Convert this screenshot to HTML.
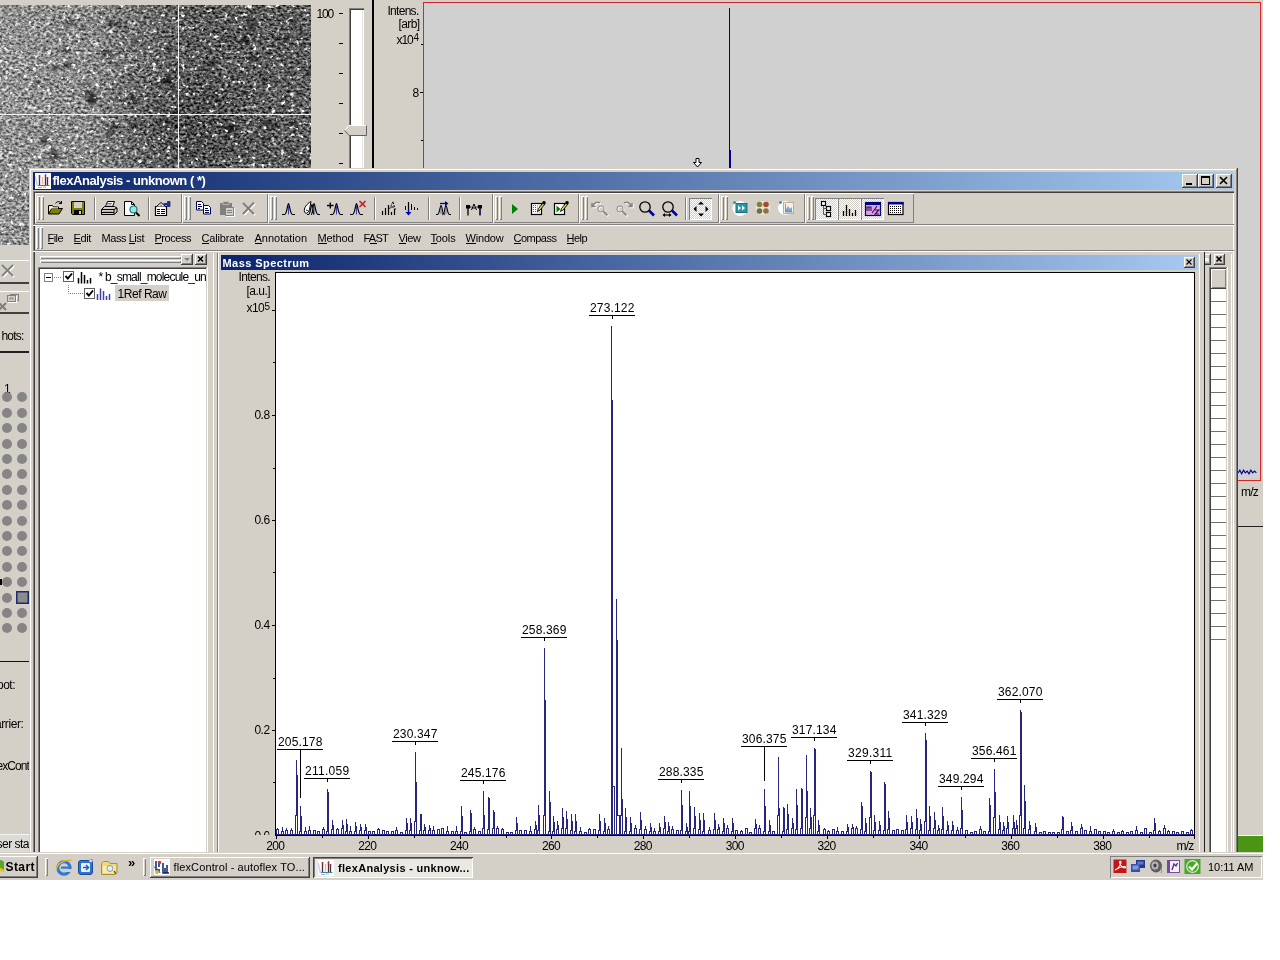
<!DOCTYPE html><html><head><meta charset="utf-8"><title>flexAnalysis - unknown</title><style>
html,body{margin:0;padding:0;background:#fff;}
body{width:1280px;height:960px;position:relative;overflow:hidden;font-family:"Liberation Sans",sans-serif;font-size:11px;color:#000;}
.a{position:absolute;}
#desk{left:0;top:0;width:1263px;height:880px;background:#d4d0c8;overflow:hidden;will-change:transform;}
.t{position:absolute;white-space:nowrap;line-height:13px;font-size:11px;}
.c{position:absolute;white-space:nowrap;line-height:14px;font-size:12px;letter-spacing:0.33px;}
.raised{box-shadow:inset -1px -1px 0 #404040,inset 1px 1px 0 #d4d0c8,inset -2px -2px 0 #808080,inset 2px 2px 0 #fff;background:#d4d0c8;}
.sunken{box-shadow:inset -1px -1px 0 #fff,inset 1px 1px 0 #808080,inset -2px -2px 0 #d4d0c8,inset 2px 2px 0 #404040;}
.btn{box-shadow:inset -1px -1px 0 #404040,inset 1px 1px 0 #fff,inset -2px -2px 0 #808080;background:#d4d0c8;}
.u{text-decoration:underline;}
</style></head><body>
<div id="desk" class="a">
<svg class="a" style="left:0;top:5px" width="311" height="240" viewBox="0 0 311 240">
<defs>
<filter id="nz" x="0" y="0" width="100%" height="100%" color-interpolation-filters="sRGB">
<feTurbulence type="fractalNoise" baseFrequency="0.32 0.42" numOctaves="2" seed="7" result="n"/>
<feColorMatrix in="n" type="matrix" values="1 0 0 0 0  1 0 0 0 0  1 0 0 0 0  0 0 0 0 1" result="g"/>
<feComposite in="SourceGraphic" in2="g" operator="arithmetic" k1="0" k2="1" k3="1.1" k4="-0.55" result="b1"/>
<feTurbulence type="fractalNoise" baseFrequency="0.21 0.24" numOctaves="2" seed="21" result="n2"/>
<feColorMatrix in="n2" type="matrix" values="0 0 0 0 1  0 0 0 0 1  0 0 0 0 1  0 6 0 0 -3.75" result="spk"/>
<feTurbulence type="fractalNoise" baseFrequency="0.05 0.07" numOctaves="2" seed="5" result="n3"/>
<feColorMatrix in="n3" type="matrix" values="0 0 0 0 0  0 0 0 0 0  0 0 0 0 0  0 0 3 0 -1.95" result="dk"/>
<feMerge><feMergeNode in="b1"/><feMergeNode in="dk"/><feMergeNode in="spk"/></feMerge>
</filter>
<linearGradient id="mg" x1="0" x2="1" y1="0" y2="0">
<stop offset="0" stop-color="#909090"/><stop offset="0.3" stop-color="#868686"/><stop offset="0.5" stop-color="#686868"/><stop offset="0.62" stop-color="#585858"/><stop offset="1" stop-color="#5a5a5a"/>
</linearGradient>
<radialGradient id="rg" cx="0.56" cy="0.5" r="0.3"><stop offset="0" stop-color="#000" stop-opacity=".22"/><stop offset="1" stop-color="#000" stop-opacity="0"/></radialGradient>
</defs>
<g filter="url(#nz)"><rect width="311" height="240" fill="url(#mg)"/><rect width="311" height="240" fill="url(#rg)"/></g>
<rect x="0" y="109" width="311" height="1" fill="#f4f4f4"/>
<rect x="178" y="0" width="1" height="165" fill="#f4f4f4"/>
</svg>
<div class="t" style="left:316.50px;top:7px;font-size:12px;line-height:15px;letter-spacing:-1.174px;color:#000;">100</div>
<div class="a" style="left:339px;top:13px;width:4px;height:1px;background:#000;"></div>
<div class="a" style="left:339px;top:43px;width:4px;height:1px;background:#000;"></div>
<div class="a" style="left:339px;top:73px;width:4px;height:1px;background:#000;"></div>
<div class="a" style="left:339px;top:103px;width:4px;height:1px;background:#000;"></div>
<div class="a" style="left:339px;top:133px;width:4px;height:1px;background:#000;"></div>
<div class="a" style="left:339px;top:163px;width:4px;height:1px;background:#000;"></div>
<div class="a" style="left:349px;top:8px;width:15px;height:165px;background:#fff;box-shadow:inset 1px 1px 0 #808080,inset 2px 2px 0 #404040,inset -1px 0 0 #fff,inset -2px 0 0 #e8e6e0;"></div>
<svg class="a" style="left:344px;top:125px" width="24" height="11" viewBox="0 0 24 11"><path d="M0.5 5.5 L5 0.5 H22.5 V10.5 H5 Z" fill="#d4d0c8"/><path d="M0.5 5.5 L5 0.5 H22.5" fill="none" stroke="#fff"/><path d="M22.5 0.5 V10.5 H5 L0.5 5.5" fill="none" stroke="#606060"/></svg>
<div class="a" style="left:372px;top:0px;width:1.6px;height:170px;background:#000;"></div>
<div class="t" style="left:387.50px;top:4px;font-size:12px;line-height:15px;letter-spacing:-0.718px;color:#000;">Intens.</div>
<div class="t" style="left:398.50px;top:17px;font-size:12px;line-height:15px;letter-spacing:-0.602px;color:#000;">[arb]</div>
<div class="t" style="left:396.50px;top:33px;font-size:12px;line-height:15px;letter-spacing:-1.116px;color:#000;">x10</div>
<div class="t" style="left:413.50px;top:31px;font-size:10px;line-height:13px;letter-spacing:-0.062px;color:#000;">4</div>
<div class="t" style="left:412.50px;top:86px;font-size:12px;line-height:15px;letter-spacing:-0.674px;color:#000;">8</div>
<div class="a" style="left:421px;top:44px;width:2px;height:1px;background:#000;"></div>
<div class="a" style="left:420px;top:92px;width:3px;height:1px;background:#000;"></div>
<div class="a" style="left:421px;top:140px;width:2px;height:1px;background:#000;"></div>
<div class="a" style="left:423px;top:2px;width:838px;height:479px;background:#d0d0d0;box-shadow:inset 0 0 0 1px #d42626;"></div>
<div class="a" style="left:729px;top:8px;width:1px;height:162px;background:#00008b;"></div>
<div class="a" style="left:729px;top:150px;width:2px;height:20px;background:#00008b;"></div>
<svg class="a" style="left:693px;top:158px" width="9" height="10" viewBox="0 0 9 10"><path d="M3 0.5h3v4h2.5L4.5 9 .5 4.5H3z" fill="#fff" stroke="#000" stroke-width="1"/></svg>
<svg class="a" style="left:1238px;top:467px" width="22" height="10" viewBox="0 0 24 10"><path d="M0 6 l2 -3 l2 4 l2 -4 l2 3 l2 -2 l2 3 l2 -4 l2 3 l2 -2 l2 2" fill="none" stroke="#00008b" stroke-width="1.2"/></svg>
<div class="t" style="left:1241.00px;top:485px;font-size:12px;line-height:15px;letter-spacing:-0.777px;color:#000;">m/z</div>
<div class="a" style="left:1238px;top:526px;width:26px;height:1.3px;background:#202020;"></div>
<div class="a" style="left:1238px;top:835px;width:26px;height:1px;background:#fff;"></div>
<div class="a" style="left:1238px;top:836px;width:26px;height:16px;background:#4a9614;"></div>
<div class="a" style="left:0px;top:260px;width:29px;height:1px;background:#fff;"></div>
<div class="a" style="left:0px;top:282px;width:29px;height:1.5px;background:#404040;"></div>
<svg class="a" style="left:0;top:263px" width="16" height="16" viewBox="0 0 16 16"><path d="M3 3L14 14M14 3L3 14" stroke="#fff" stroke-width="2"/><path d="M2 2L13 13M13 2L2 13" stroke="#808080" stroke-width="1.800"/></svg>
<div class="a" style="left:0px;top:291px;width:29px;height:1px;background:#fff;"></div>
<div class="a" style="left:0px;top:312px;width:29px;height:1.5px;background:#404040;"></div>
<svg class="a" style="left:0;top:293px" width="20" height="19" viewBox="0 0 20 19"><rect x="10.500" y="1.500" width="8" height="6" fill="#d4d0c8" stroke="#808080"/><rect x="8.500" y="3.500" width="8" height="6" fill="#d4d0c8" stroke="#fff"/><rect x="7.500" y="2.500" width="8" height="6" fill="#d4d0c8" stroke="#808080"/><path d="M10 7v-2h3v2" stroke="#808080" fill="none"/><path d="M-1 10L6 17M6 10L-1 17" stroke="#808080" stroke-width="2"/></svg>
<div class="t" style="left:1.50px;top:329px;font-size:12px;line-height:15px;letter-spacing:-0.803px;color:#000;">hots:</div>
<div class="a" style="left:0px;top:351px;width:29px;height:1.5px;background:#202020;"></div>
<div class="t" style="left:4.00px;top:382px;font-size:12px;line-height:15px;letter-spacing:-3.174px;color:#000;">1</div>
<div class="a" style="left:2.2px;top:392.3px;width:10px;height:10px;border-radius:50%;background:#858585;"></div>
<div class="a" style="left:17.3px;top:392.3px;width:10px;height:10px;border-radius:50%;background:#858585;"></div>
<div class="a" style="left:2.2px;top:407.7px;width:10px;height:10px;border-radius:50%;background:#858585;"></div>
<div class="a" style="left:17.3px;top:407.7px;width:10px;height:10px;border-radius:50%;background:#858585;"></div>
<div class="a" style="left:2.2px;top:423.1px;width:10px;height:10px;border-radius:50%;background:#858585;"></div>
<div class="a" style="left:17.3px;top:423.1px;width:10px;height:10px;border-radius:50%;background:#858585;"></div>
<div class="a" style="left:2.2px;top:438.5px;width:10px;height:10px;border-radius:50%;background:#858585;"></div>
<div class="a" style="left:17.3px;top:438.5px;width:10px;height:10px;border-radius:50%;background:#858585;"></div>
<div class="a" style="left:2.2px;top:453.9px;width:10px;height:10px;border-radius:50%;background:#858585;"></div>
<div class="a" style="left:17.3px;top:453.9px;width:10px;height:10px;border-radius:50%;background:#858585;"></div>
<div class="a" style="left:2.2px;top:469.3px;width:10px;height:10px;border-radius:50%;background:#858585;"></div>
<div class="a" style="left:17.3px;top:469.3px;width:10px;height:10px;border-radius:50%;background:#858585;"></div>
<div class="a" style="left:2.2px;top:484.7px;width:10px;height:10px;border-radius:50%;background:#858585;"></div>
<div class="a" style="left:17.3px;top:484.7px;width:10px;height:10px;border-radius:50%;background:#858585;"></div>
<div class="a" style="left:2.2px;top:500.1px;width:10px;height:10px;border-radius:50%;background:#858585;"></div>
<div class="a" style="left:17.3px;top:500.1px;width:10px;height:10px;border-radius:50%;background:#858585;"></div>
<div class="a" style="left:2.2px;top:515.5px;width:10px;height:10px;border-radius:50%;background:#858585;"></div>
<div class="a" style="left:17.3px;top:515.5px;width:10px;height:10px;border-radius:50%;background:#858585;"></div>
<div class="a" style="left:2.2px;top:530.9px;width:10px;height:10px;border-radius:50%;background:#858585;"></div>
<div class="a" style="left:17.3px;top:530.9px;width:10px;height:10px;border-radius:50%;background:#858585;"></div>
<div class="a" style="left:2.2px;top:546.3px;width:10px;height:10px;border-radius:50%;background:#858585;"></div>
<div class="a" style="left:17.3px;top:546.3px;width:10px;height:10px;border-radius:50%;background:#858585;"></div>
<div class="a" style="left:2.2px;top:561.7px;width:10px;height:10px;border-radius:50%;background:#858585;"></div>
<div class="a" style="left:17.3px;top:561.7px;width:10px;height:10px;border-radius:50%;background:#858585;"></div>
<div class="a" style="left:2.2px;top:577.1px;width:10px;height:10px;border-radius:50%;background:#858585;"></div>
<div class="a" style="left:17.3px;top:577.1px;width:10px;height:10px;border-radius:50%;background:#858585;"></div>
<div class="a" style="left:2.2px;top:592.5px;width:10px;height:10px;border-radius:50%;background:#858585;"></div>
<div class="a" style="left:16px;top:591px;width:13px;height:13px;background:#8c8c8c;box-shadow:inset 0 0 0 1.500px #1c2c6c;"></div>
<div class="a" style="left:2.2px;top:607.9px;width:10px;height:10px;border-radius:50%;background:#858585;"></div>
<div class="a" style="left:17.3px;top:607.9px;width:10px;height:10px;border-radius:50%;background:#858585;"></div>
<div class="a" style="left:2.2px;top:623.3px;width:10px;height:10px;border-radius:50%;background:#858585;"></div>
<div class="a" style="left:17.3px;top:623.3px;width:10px;height:10px;border-radius:50%;background:#858585;"></div>
<div class="a" style="left:0px;top:579px;width:2px;height:6px;background:#000;"></div>
<div class="a" style="left:0px;top:661px;width:29px;height:1.2px;background:#101010;"></div>
<div class="a" style="left:0;top:660px;width:29px;height:200px;overflow:hidden">
<div class="t" style="left:-3.00px;top:18px;font-size:12px;line-height:15px;letter-spacing:-0.504px;color:#000;">oot:</div>
<div class="t" style="left:-5.00px;top:57px;font-size:12px;line-height:15px;letter-spacing:-0.405px;color:#000;">arrier:</div>
<div class="t" style="left:-3.50px;top:99px;font-size:12px;line-height:15px;letter-spacing:-0.920px;color:#000;">exCont</div>
<div class="a" style="left:0px;top:174px;width:29px;height:20px;background:#dddbd5;box-shadow:inset 0 1px 0 #f4f3f0;"></div>
<div class="t" style="left:-3.50px;top:177px;font-size:12px;line-height:15px;letter-spacing:-0.502px;color:#000;">ser sta</div>
</div>
<div class="a raised" style="left:29px;top:168px;width:1209px;height:690px;background:#d4d0c8;"></div>
<div class="a" style="left:33px;top:172px;width:1201px;height:18px;background:linear-gradient(90deg,#0a246a,#a6caf0);"></div>
<svg class="a" style="left:35px;top:173px" width="16" height="16" viewBox="0 0 16 16"><rect width="16" height="16" fill="#fdfdff"/><path d="M4.500 2v10M10.500 1.500v10.500M12.500 4v8" stroke="#4a2a3a" stroke-width="1.300"/><path d="M4.500 2v3M10.500 1.500v3M12.500 4v2" stroke="#a03030" stroke-width="1.300"/><path d="M7.500 4v7.500" stroke="#f4b0a0" stroke-width="1.400"/><path d="M2 12.500h12.500" stroke="#3c8c84"/><path d="M3 14.500h4M8 14h3" stroke="#9cb0e8"/><path d="M0 3l2.500 10" stroke="#c8d0f0" stroke-width="1.500"/></svg>
<div class="t" style="left:52.50px;top:173px;font-size:13px;line-height:16px;letter-spacing:-0.460px;color:#fff;font-weight:bold;">flexAnalysis - unknown ( *)</div>
<div class="a btn" style="left:1182px;top:174px;width:16px;height:14px;background:#d4d0c8;"></div>
<svg class="a" style="left:1182px;top:174px" width="16" height="14" viewBox="0 0 16 14"><rect x="4" y="9" width="6" height="2" fill="#000"/></svg>
<div class="a btn" style="left:1198px;top:174px;width:16px;height:14px;background:#d4d0c8;"></div>
<svg class="a" style="left:1198px;top:174px" width="16" height="14" viewBox="0 0 16 14"><rect x="3.5" y="2.5" width="8" height="8" fill="none" stroke="#000"/><rect x="3" y="2" width="9" height="2" fill="#000"/></svg>
<div class="a btn" style="left:1216px;top:174px;width:16px;height:14px;background:#d4d0c8;"></div>
<svg class="a" style="left:1216px;top:174px" width="16" height="14" viewBox="0 0 16 14"><path d="M4 3l7 7M11 3l-7 7" stroke="#000" stroke-width="1.7"/></svg>
<div class="a" style="left:33px;top:191px;width:1201px;height:670px;background:#d4d0c8;box-shadow:inset 1px 1px 0 #808080,inset 2px 2px 0 #404040,inset -1px -1px 0 #fff;"></div>
<div class="a" style="left:35px;top:193px;width:147px;height:30px;background:#d4d0c8;box-shadow:inset 1px 1px 0 #fff,inset -1px -1px 0 #808080;"></div>
<div class="a" style="left:37px;top:196px;width:3px;height:24px;background:#d4d0c8;box-shadow:inset 1px 1px 0 #fff,inset -1px -1px 0 #808080;"></div>
<div class="a" style="left:41px;top:196px;width:3px;height:24px;background:#d4d0c8;box-shadow:inset 1px 1px 0 #fff,inset -1px -1px 0 #808080;"></div>
<div class="a" style="left:182px;top:193px;width:86px;height:30px;background:#d4d0c8;box-shadow:inset 1px 1px 0 #fff,inset -1px -1px 0 #808080;"></div>
<div class="a" style="left:184px;top:196px;width:3px;height:24px;background:#d4d0c8;box-shadow:inset 1px 1px 0 #fff,inset -1px -1px 0 #808080;"></div>
<div class="a" style="left:188px;top:196px;width:3px;height:24px;background:#d4d0c8;box-shadow:inset 1px 1px 0 #fff,inset -1px -1px 0 #808080;"></div>
<div class="a" style="left:268px;top:193px;width:225px;height:30px;background:#d4d0c8;box-shadow:inset 1px 1px 0 #fff,inset -1px -1px 0 #808080;"></div>
<div class="a" style="left:270px;top:196px;width:3px;height:24px;background:#d4d0c8;box-shadow:inset 1px 1px 0 #fff,inset -1px -1px 0 #808080;"></div>
<div class="a" style="left:274px;top:196px;width:3px;height:24px;background:#d4d0c8;box-shadow:inset 1px 1px 0 #fff,inset -1px -1px 0 #808080;"></div>
<div class="a" style="left:493px;top:193px;width:86px;height:30px;background:#d4d0c8;box-shadow:inset 1px 1px 0 #fff,inset -1px -1px 0 #808080;"></div>
<div class="a" style="left:495px;top:196px;width:3px;height:24px;background:#d4d0c8;box-shadow:inset 1px 1px 0 #fff,inset -1px -1px 0 #808080;"></div>
<div class="a" style="left:499px;top:196px;width:3px;height:24px;background:#d4d0c8;box-shadow:inset 1px 1px 0 #fff,inset -1px -1px 0 #808080;"></div>
<div class="a" style="left:579px;top:193px;width:140px;height:30px;background:#d4d0c8;box-shadow:inset 1px 1px 0 #fff,inset -1px -1px 0 #808080;"></div>
<div class="a" style="left:581px;top:196px;width:3px;height:24px;background:#d4d0c8;box-shadow:inset 1px 1px 0 #fff,inset -1px -1px 0 #808080;"></div>
<div class="a" style="left:585px;top:196px;width:3px;height:24px;background:#d4d0c8;box-shadow:inset 1px 1px 0 #fff,inset -1px -1px 0 #808080;"></div>
<div class="a" style="left:719px;top:193px;width:86px;height:30px;background:#d4d0c8;box-shadow:inset 1px 1px 0 #fff,inset -1px -1px 0 #808080;"></div>
<div class="a" style="left:721px;top:196px;width:3px;height:24px;background:#d4d0c8;box-shadow:inset 1px 1px 0 #fff,inset -1px -1px 0 #808080;"></div>
<div class="a" style="left:725px;top:196px;width:3px;height:24px;background:#d4d0c8;box-shadow:inset 1px 1px 0 #fff,inset -1px -1px 0 #808080;"></div>
<div class="a" style="left:805px;top:193px;width:109px;height:30px;background:#d4d0c8;box-shadow:inset 1px 1px 0 #fff,inset -1px -1px 0 #808080;"></div>
<div class="a" style="left:807px;top:196px;width:3px;height:24px;background:#d4d0c8;box-shadow:inset 1px 1px 0 #fff,inset -1px -1px 0 #808080;"></div>
<div class="a" style="left:811px;top:196px;width:3px;height:24px;background:#d4d0c8;box-shadow:inset 1px 1px 0 #fff,inset -1px -1px 0 #808080;"></div>
<div class="a" style="left:94px;top:197px;width:1px;height:23px;background:#808080;"></div>
<div class="a" style="left:95px;top:197px;width:1px;height:23px;background:#fff;"></div>
<div class="a" style="left:148px;top:197px;width:1px;height:23px;background:#808080;"></div>
<div class="a" style="left:149px;top:197px;width:1px;height:23px;background:#fff;"></div>
<div class="a" style="left:374px;top:197px;width:1px;height:23px;background:#808080;"></div>
<div class="a" style="left:375px;top:197px;width:1px;height:23px;background:#fff;"></div>
<div class="a" style="left:428px;top:197px;width:1px;height:23px;background:#808080;"></div>
<div class="a" style="left:429px;top:197px;width:1px;height:23px;background:#fff;"></div>
<div class="a" style="left:459px;top:197px;width:1px;height:23px;background:#808080;"></div>
<div class="a" style="left:460px;top:197px;width:1px;height:23px;background:#fff;"></div>
<div class="a" style="left:685px;top:197px;width:1px;height:23px;background:#808080;"></div>
<div class="a" style="left:686px;top:197px;width:1px;height:23px;background:#fff;"></div>
<div class="a" style="left:689px;top:198px;width:23px;height:22px;background:#ebe9e4;box-shadow:inset 1px 1px 0 #808080,inset -1px -1px 0 #fff;background-image:repeating-conic-gradient(#fff 0 25%,#d4d0c8 0 50%);background-size:2px 2px;"></div>
<div class="a" style="left:815px;top:198px;width:23px;height:22px;background:#ebe9e4;box-shadow:inset 1px 1px 0 #808080,inset -1px -1px 0 #fff;background-image:repeating-conic-gradient(#fff 0 25%,#d4d0c8 0 50%);background-size:2px 2px;"></div>
<div class="a" style="left:838px;top:198px;width:23px;height:22px;background:#ebe9e4;box-shadow:inset 1px 1px 0 #808080,inset -1px -1px 0 #fff;background-image:repeating-conic-gradient(#fff 0 25%,#d4d0c8 0 50%);background-size:2px 2px;"></div>
<div class="a" style="left:861px;top:198px;width:23px;height:22px;background:#ebe9e4;box-shadow:inset 1px 1px 0 #808080,inset -1px -1px 0 #fff;background-image:repeating-conic-gradient(#fff 0 25%,#d4d0c8 0 50%);background-size:2px 2px;"></div>
<svg class="a" style="left:0;top:0" width="1264" height="880" viewBox="0 0 1264 880"><g transform="translate(47 200)"><path d="M1.500 5.500h4l1 1.500h5v2" fill="#ffff9c" stroke="#000"/><path d="M1.500 5.500v8.500" stroke="#000"/><path d="M1.500 14l3-5.500h11l-3.500 5.500z" fill="#808000" stroke="#000"/><path d="M2.500 7v4.500l1.500-3h7v-1h-5.500l-1-1.500z" fill="#ffff9c"/><path d="M8.500 3.500c1.500-2.500 4.500-2.500 6 0M14.500 1v2.500h-2.500" stroke="#000" fill="none"/></g><g transform="translate(71 201)"><path d="M0.500 0.500h13v13h-12l-1-1z" fill="#808000" stroke="#000"/><rect x="3" y="1" width="8" height="6" fill="#d4d0c8"/><rect x="3" y="9" width="8" height="4.500" fill="#000"/><rect x="8" y="10" width="2" height="3" fill="#d4d0c8"/></g><g transform="translate(101 201)"><path d="M4.500 5.500l2-5h7l-2 5" fill="#fff" stroke="#000"/><path d="M0.500 8.500l3-3h10l2.500 1.500v4l-3 2.500h-12.500z" fill="#d4d0c8" stroke="#000"/><path d="M0.500 8.500h12.500l3-1.500M13 8.500v5" stroke="#000" fill="none"/><path d="M2 10.500h9" stroke="#c0c000"/><path d="M0.500 11.500h12.500" stroke="#000"/><path d="M6 2.500h5M5.500 4h5" stroke="#808080"/></g><g transform="translate(124 201)"><path d="M0.500 0.500h7l3 3v11h-10z" fill="#fff" stroke="#000"/><path d="M7.500 0.500v3h3" stroke="#000" fill="none"/><circle cx="9.500" cy="8.500" r="3.500" fill="#a8e0e0" stroke="#008080" stroke-width="1.200"/><path d="M12 11.500l3.500 3.500" stroke="#000" stroke-width="2"/></g><g transform="translate(155 201)"><path d="M0.500 5.500h11v9h-11z" fill="#fff" stroke="#000" stroke-width="1.200"/><path d="M2 8.500h3M6 8.500h4M2 10.500h3M6 10.500h4M2 12.500h3M6 12.500h4" stroke="#000"/><path d="M1.500 5.500l4.500-4 4.500 4" fill="#fff" stroke="#000"/><path d="M4 4.500l2 -2 2 2M5 5l1-1 1 1" stroke="#808080" stroke-width=".8" fill="none"/><path d="M8.500 2.500h4v-2h2.500v5h-2.500v-1.500h-3" fill="#2030a0" stroke="#101870" stroke-width=".7"/></g><g transform="translate(196 201)"><path d="M0.500 0.500h5l2 2v6.500h-7z" fill="#fff" stroke="#000050"/><path d="M2 3.500h3M2 5.500h4M2 7.500h2" stroke="#000050"/><path d="M7.500 4.500h5l2 2v6.500h-7z" fill="#fff" stroke="#000050"/><path d="M9 7.500h3M9 9.500h4M9 11.500h4" stroke="#000050"/></g><g transform="translate(219 201)"><path d="M1 2h12v12h-12z" fill="#808080"/><path d="M4 0.500h6v3h-6z" fill="#808080" stroke="#d4d0c8" stroke-width=".6"/><path d="M6.500 6.500h8v8h-8z" fill="#d4d0c8" stroke="#808080"/><path d="M8 9.500h5M8 11.500h5" stroke="#808080"/><path d="M7 15.500h8.500v-8.500" stroke="#fff" fill="none"/></g><g transform="translate(242 202)"><path d="M2 2l11 11M13 1.500l-11 11.500" stroke="#fff" stroke-width="2" fill="none"/><path d="M1 1l11 11M12 0.500l-11 11.500" stroke="#808080" stroke-width="2" fill="none"/></g><g transform="translate(282 203)"><path d="M0 11.500h2.500c2.500 0 3-11 4-11s1.500 11 4 11h2.500" stroke="#000" fill="none" stroke-width="1.200"/><path d="M6.500 2v9.500" stroke="#3030a0" stroke-width=".9"/></g><g transform="translate(304 203)"><path d="M3 11.500h1.500c2 0 2.500-10 3.500-10s1 10 2 10M7 11.500c2 0 2-11 3-11s1.500 11 4 11h2" stroke="#000" fill="none" stroke-width="1.200"/><path d="M0.500 9c-1-4 2-8 6.500-10.500l-1.500 8c-1 3-3.500 5-5 2.500z" fill="#fff" stroke="#000" stroke-width="1"/><path d="M2 7l2.500 1" stroke="#000" stroke-width=".8"/><path d="M10 2v9.500" stroke="#3030a0" stroke-width=".9"/></g><g transform="translate(330 203)"><path d="M-3 2.500h6.500M0.300 -0.500v6" stroke="#000" fill="none" stroke-width="1.400"/><path d="M0 11.500h2.500c2.500 0 3-11 4-11s1.500 11 4 11h2.500" stroke="#000" fill="none" stroke-width="1.200"/><path d="M6.500 2v9.500" stroke="#3030a0" stroke-width=".9"/></g><g transform="translate(350 203)"><path d="M0 11.500h2.500c2.500 0 3-11 4-11s1.500 11 4 11h2.500" stroke="#000" fill="none" stroke-width="1.200"/><path d="M6.500 2v9.500" stroke="#3030a0" stroke-width=".9"/><path d="M9.500 -2l6 6M15.500 -2l-6 6" stroke="#c82020" stroke-width="1.700" fill="none"/></g><g transform="translate(382 201)"><path d="M0.500 14v-4M3.500 14v-7M6.500 14v-10M9.500 14v-3M12.500 14v-6" stroke="#000" stroke-width="1.200"/><path d="M7.500 8l3.500-7.500 2.500 9" stroke="#000" fill="none" stroke-width=".9" stroke-dasharray="2 1"/><path d="M9 6h3" stroke="#000"/></g><g transform="translate(405 202)"><path d="M3.500 0v9" stroke="#000" stroke-width="1.200"/><path d="M0.500 4v4M6.500 2v6" stroke="#000"/><path d="M9.500 5v3M12.500 6v2" stroke="#000"/><path d="M3.500 8v4" stroke="#0000c0" stroke-width="1.400"/><path d="M0.500 10h6l-3 3.500z" fill="#0000c0"/></g><g transform="translate(436 201)"><path d="M0 13.500h1.500c2 0 2.500-9 3.500-9s1.500 8 2.500 8 1.500-8 2.500-8 1.500 9 3.500 9h1.500" stroke="#000" fill="none" stroke-width="1.100"/><path d="M5 6v7M10 6v7" stroke="#4040a0" stroke-width=".7"/><path d="M4 2.500h7" stroke="#0000a0" stroke-width="1.300"/><path d="M9 0l3.500 2.500-3.500 2.500z" fill="#0000a0"/><path d="M6 12l3 2M9 12l-3 2" stroke="#000" stroke-width=".7"/></g><g transform="translate(466 204)"><path d="M2 2.500v9M14 2.500v9" stroke="#000" stroke-width="1.300"/><rect x="0" y="1" width="4" height="3.500" fill="#000"/><rect x="12" y="1" width="4" height="3.500" fill="#000"/><path d="M4 3h1.500M10.500 3h1.500" stroke="#000"/><path d="M5.500 6l2.500-6 2.500 6M6.500 4h3" stroke="#000" fill="none" stroke-width="1"/><path d="M14 5v6" stroke="#0000a0" stroke-width=".8"/></g><g transform="translate(512 204)"><path d="M0 0l6 5-6 5z" fill="#008000"/></g><g transform="translate(531 201)"><rect x="0.500" y="2.500" width="10" height="11" fill="#fff" stroke="#000" stroke-width="1.200"/><path d="M2.500 4v8M4.500 4v8" stroke="#606060" stroke-dasharray="1 1"/><path d="M6 5h3M6 7h2M6 9h2M6 11h3" stroke="#8080c0" stroke-dasharray="1 1"/><path d="M6.500 10.500l1-3 5-6 1.500 1.500-5 6z" fill="#e8e060" stroke="#000" stroke-width=".9"/><circle cx="13" cy="1.800" r="1.800" fill="#000"/></g><g transform="translate(554 201)"><rect x="0.500" y="2.500" width="10" height="11" fill="#fff" stroke="#000" stroke-width="1.200"/><path d="M2.500 4.500l4 3.500-4 3.500z" fill="#008000"/><path d="M6.500 10.500l1-3 5-6 1.500 1.500-5 6z" fill="#e8e060" stroke="#000" stroke-width=".9"/><circle cx="13" cy="1.800" r="1.800" fill="#000"/></g><g transform="translate(592 201)"><g transform="translate(1 1)"><g transform="translate(5 4) scale(.72)"><circle cx="5.500" cy="5.500" r="4.300" fill="none" stroke="#fff" stroke-width="1.200"/><path d="M9 9l5.500 5.500" stroke="#fff" stroke-width="2.4"/></g><path d="M1 5c1-3 4-5 7-3M0 2v3.500h3.500" stroke="#fff" stroke-width="1.500" fill="none"/></g><g transform="translate(5 4) scale(.72)"><circle cx="5.500" cy="5.500" r="4.300" fill="none" stroke="#808080" stroke-width="1.200"/><path d="M9 9l5.500 5.500" stroke="#808080" stroke-width="2.4"/></g><path d="M1 5c1-3 4-5 7-3M0 2v3.500h3.500" stroke="#808080" stroke-width="1.500" fill="none"/></g><g transform="translate(616 201)"><g transform="translate(1 1)"><g transform="translate(0 4) scale(.72)"><circle cx="5.500" cy="5.500" r="4.300" fill="none" stroke="#fff" stroke-width="1.200"/><path d="M9 9l5.500 5.500" stroke="#fff" stroke-width="2.4"/></g><path d="M8 2c3-2 6 0 7 3M16 2v3.500h-3.500" stroke="#fff" stroke-width="1.500" fill="none"/></g><g transform="translate(0 4) scale(.72)"><circle cx="5.500" cy="5.500" r="4.300" fill="none" stroke="#808080" stroke-width="1.200"/><path d="M9 9l5.500 5.500" stroke="#808080" stroke-width="2.4"/></g><path d="M8 2c3-2 6 0 7 3M16 2v3.500h-3.500" stroke="#808080" stroke-width="1.500" fill="none"/></g><g transform="translate(639 201)"><circle cx="6" cy="6" r="5.200" fill="none" stroke="#000" stroke-width="1.300"/><path d="M10 9.500l5 5" stroke="#0000a0" stroke-width="2.600"/></g><g transform="translate(662 201)"><circle cx="6" cy="6" r="5.200" fill="none" stroke="#000" stroke-width="1.300"/><path d="M10 9.500l5 5" stroke="#0000a0" stroke-width="2.600"/><path d="M1.500 14h7" stroke="#000" stroke-width="1.200"/><path d="M0.500 14l2.500-2v4zM9.500 14l-2.500-2v4z" fill="#000"/></g><g transform="translate(693 201)"><path d="M8 0.500l3 3h-6zM8 15.500l3-3h-6zM0.500 8l3-3v6zM15.500 8l-3-3v6z" fill="#000"/></g><g transform="translate(732 200)"><circle cx="8" cy="8.500" r="7.500" fill="#fff"/><rect x="4" y="3.500" width="11" height="9" fill="#2898a8" stroke="#187080"/><path d="M6 5.500l3 2.500-3 2.500zM10 5.500l3 2.500-3 2.500z" fill="#fff"/><circle cx="2.500" cy="2.500" r="1.300" fill="#2080a0"/></g><g transform="translate(756 201)"><ellipse cx="7" cy="7" rx="7.500" ry="7" fill="#e8e4dc"/><circle cx="3.500" cy="3.500" r="2.800" fill="#808040"/><circle cx="10" cy="3.500" r="2.800" fill="#a05030"/><circle cx="3.500" cy="10" r="2.800" fill="#707038"/><circle cx="10" cy="10" r="2.800" fill="#907040"/></g><g transform="translate(778 200)"><circle cx="7" cy="8" r="7" fill="#fff"/><rect x="5.500" y="2.500" width="10" height="11" fill="#f4f0e8" stroke="#c0b090"/><path d="M7 11l3-5 2 3 2-2v5h-7z" fill="#80a0c8"/><path d="M7.500 4v8h7" stroke="#6080a0" fill="none" stroke-width=".8"/><circle cx="2.500" cy="2.500" r="1.300" fill="#2080a0"/></g><g transform="translate(818 201)"><rect x="3.500" y="0.500" width="4" height="4" fill="#fff" stroke="#000" stroke-width="1.200"/><rect x="8.500" y="5.500" width="4" height="4" fill="#fff" stroke="#000" stroke-width="1.200"/><rect x="8.500" y="11.500" width="4" height="4" fill="#fff" stroke="#000" stroke-width="1.200"/><path d="M5.500 5v8.500h3M5.500 7.500h3" stroke="#606060" fill="none"/></g><g transform="translate(843 202)"><path d="M0.500 14v-5M3.500 14v-11M6.500 14v-7M9.500 14v-3M12.500 14v-6" stroke="#000" stroke-width="1.300"/></g><g transform="translate(865 201)"><rect x="0.500" y="1.500" width="15" height="13" fill="#d8a8e0" stroke="#000080" stroke-width="1.200"/><rect x="0" y="1" width="16" height="3" fill="#000080"/><path d="M2 10v-4h2v4M4 6h2v4M7 12l5-7M10 9h4l-4 4h4" stroke="#400060" fill="none" stroke-width="1.100"/></g><g transform="translate(888 202)"><rect x="0.500" y="0.500" width="14.500" height="12" fill="#fff" stroke="#000" stroke-width="1.200"/><rect x="0" y="0" width="15.500" height="2.500" fill="#000080"/><path d="M2 4.500h12M2 6.500h12M2 8.500h12M2 10.500h12" stroke="#000" stroke-dasharray="1 1"/></g></svg>
<div class="a" style="left:33px;top:224px;width:1201px;height:1px;background:#808080;"></div>
<div class="a" style="left:33px;top:225px;width:1201px;height:1px;background:#fff;"></div>
<div class="a" style="left:36px;top:227px;width:3px;height:22px;background:#d4d0c8;box-shadow:inset 1px 1px 0 #fff,inset -1px -1px 0 #808080;"></div>
<div class="a" style="left:40px;top:227px;width:3px;height:22px;background:#d4d0c8;box-shadow:inset 1px 1px 0 #fff,inset -1px -1px 0 #808080;"></div>
<div class="a" style="left:47.5px;top:243px;width:6.7px;height:1px;background:#000"></div>
<div class="t" style="left:47.50px;top:231px;font-size:11px;line-height:14px;letter-spacing:-0.556px;color:#000;">File</div>
<div class="a" style="left:73.5px;top:243px;width:7.3px;height:1px;background:#000"></div>
<div class="t" style="left:73.50px;top:231px;font-size:11px;line-height:14px;letter-spacing:-0.364px;color:#000;">Edit</div>
<div class="a" style="left:128.6px;top:243px;width:6.1px;height:1px;background:#000"></div>
<div class="t" style="left:101.50px;top:231px;font-size:11px;line-height:14px;letter-spacing:-0.439px;color:#000;">Mass List</div>
<div class="a" style="left:154.5px;top:243px;width:7.3px;height:1px;background:#000"></div>
<div class="t" style="left:154.50px;top:231px;font-size:11px;line-height:14px;letter-spacing:-0.462px;color:#000;">Process</div>
<div class="a" style="left:201.5px;top:243px;width:7.9px;height:1px;background:#000"></div>
<div class="t" style="left:201.50px;top:231px;font-size:11px;line-height:14px;letter-spacing:-0.169px;color:#000;">Calibrate</div>
<div class="a" style="left:254.5px;top:243px;width:7.3px;height:1px;background:#000"></div>
<div class="t" style="left:254.50px;top:231px;font-size:11px;line-height:14px;letter-spacing:-0.010px;color:#000;">Annotation</div>
<div class="a" style="left:317.5px;top:243px;width:9.2px;height:1px;background:#000"></div>
<div class="t" style="left:317.50px;top:231px;font-size:11px;line-height:14px;letter-spacing:-0.115px;color:#000;">Method</div>
<div class="a" style="left:369.5px;top:243px;width:7.3px;height:1px;background:#000"></div>
<div class="t" style="left:363.50px;top:231px;font-size:11px;line-height:14px;letter-spacing:-0.752px;color:#000;">FAST</div>
<div class="a" style="left:398.5px;top:243px;width:7.3px;height:1px;background:#000"></div>
<div class="t" style="left:398.50px;top:231px;font-size:11px;line-height:14px;letter-spacing:-0.411px;color:#000;">View</div>
<div class="a" style="left:430.5px;top:243px;width:6.7px;height:1px;background:#000"></div>
<div class="t" style="left:430.50px;top:231px;font-size:11px;line-height:14px;letter-spacing:-0.136px;color:#000;">Tools</div>
<div class="a" style="left:465.5px;top:243px;width:10.4px;height:1px;background:#000"></div>
<div class="t" style="left:465.50px;top:231px;font-size:11px;line-height:14px;letter-spacing:-0.187px;color:#000;">Window</div>
<div class="a" style="left:513.5px;top:243px;width:7.9px;height:1px;background:#000"></div>
<div class="t" style="left:513.50px;top:231px;font-size:11px;line-height:14px;letter-spacing:-0.494px;color:#000;">Compass</div>
<div class="a" style="left:566.5px;top:243px;width:7.9px;height:1px;background:#000"></div>
<div class="t" style="left:566.50px;top:231px;font-size:11px;line-height:14px;letter-spacing:-0.531px;color:#000;">Help</div>
<div class="a" style="left:33px;top:250px;width:1201px;height:1px;background:#808080;"></div>
<div class="a" style="left:33px;top:251px;width:1201px;height:1px;background:#fff;"></div>
<div class="a" style="left:40px;top:256px;width:141px;height:3px;background:#d4d0c8;box-shadow:inset 1px 1px 0 #fff,inset -1px -1px 0 #808080;"></div>
<div class="a" style="left:40px;top:260px;width:141px;height:3px;background:#d4d0c8;box-shadow:inset 1px 1px 0 #fff,inset -1px -1px 0 #808080;"></div>
<div class="a btn" style="left:181px;top:254px;width:12px;height:11px;background:#d4d0c8;"></div>
<svg class="a" style="left:181px;top:254px" width="12" height="11" viewBox="0 0 12 11"><path d="M3 4h6l-3 3z" fill="#808080"/><path d="M4 5h6l-3 3z" fill="#fff" opacity=".0"/></svg>
<div class="a btn" style="left:195px;top:254px;width:12px;height:11px;background:#d4d0c8;"></div>
<svg class="a" style="left:195px;top:254px" width="12" height="11" viewBox="0 0 12 11"><path d="M3 2.5l5 5M8 2.5l-5 5" stroke="#000" stroke-width="1.5"/></svg>
<div class="a sunken" style="left:38px;top:267px;width:170px;height:590px;background:#fff;"></div>
<svg class="a" style="left:40px;top:269px" width="166" height="34" viewBox="0 0 166 34">
<rect x="4.500" y="4.500" width="8" height="8" fill="#fff" stroke="#808080"/><path d="M6 8.500h5" stroke="#000"/>
<path d="M14 8.500h7 M28.500 16v8.500h15" stroke="#808080" stroke-dasharray="1 1" fill="none"/>
<rect x="23.500" y="2.500" width="10" height="10" fill="#fff" stroke="#606060"/>
<path d="M25.500 7l2.300 2.500L32 4.500" stroke="#000" stroke-width="1.900" fill="none"/>
<path d="M38.500 14.500V9 M41.500 14.500V3 M44.500 14.500V6 M47.500 14.500V11 M50.500 14.500V9" stroke="#000" stroke-width="1.500"/>
<rect x="44.500" y="19.500" width="10" height="10" fill="#fff" stroke="#606060"/>
<path d="M46.500 24l2.300 2.500L53 21.500" stroke="#000" stroke-width="1.900" fill="none"/>
<path d="M57.500 31V25 M60.500 31V19.500 M63.500 31V22 M66.500 31V27 M69.500 31V25" stroke="#3a449c" stroke-width="1.500"/>
</svg>
<div class="a" style="left:40px;top:269px;width:166px;height:40px;overflow:hidden">
<div class="t" style="left:58.50px;top:1px;font-size:12px;line-height:15px;letter-spacing:-0.789px;color:#000;">* b_small_molecule_un</div>
</div>
<div class="a" style="left:115px;top:285px;width:54px;height:16px;background:#d4d0c8;"></div>
<div class="t" style="left:117.50px;top:287px;font-size:12px;line-height:15px;letter-spacing:-0.461px;color:#000;">1Ref Raw</div>
<div class="a" style="left:213px;top:253px;width:1px;height:601px;background:#fff;"></div>
<div class="a" style="left:217px;top:253px;width:1px;height:601px;background:#808080;"></div>
<div class="a" style="left:218px;top:253px;width:1px;height:601px;background:#fff;"></div>
<div class="a" style="left:221px;top:255px;width:977px;height:15px;background:linear-gradient(90deg,#0a246a,#a6caf0);"></div>
<div class="t" style="left:222.50px;top:256px;font-size:11px;line-height:14px;letter-spacing:0.438px;color:#fff;font-weight:bold;">Mass Spectrum</div>
<div class="a btn" style="left:1184px;top:257px;width:11px;height:11px;background:#d4d0c8;"></div>
<svg class="a" style="left:1184px;top:257px" width="11" height="11" viewBox="0 0 11 11"><path d="M2.500 2.500l5 5M7.500 2.500l-5 5" stroke="#000" stroke-width="1.100"/></svg>
<div class="t" style="left:238.50px;top:270px;font-size:12px;line-height:15px;letter-spacing:-0.646px;color:#000;">Intens.</div>
<div class="t" style="left:246.50px;top:284px;font-size:12px;line-height:15px;letter-spacing:-0.531px;color:#000;">[a.u.]</div>
<div class="t" style="left:246.50px;top:301px;font-size:12px;line-height:15px;letter-spacing:-0.616px;color:#000;">x10</div>
<div class="t" style="left:264.50px;top:300px;font-size:10px;line-height:13px;letter-spacing:0.438px;color:#000;">5</div>
<div class="t" style="left:254.50px;top:408px;font-size:12px;line-height:15px;letter-spacing:-0.561px;color:#000;">0.8</div>
<div class="t" style="left:254.50px;top:513px;font-size:12px;line-height:15px;letter-spacing:-0.561px;color:#000;">0.6</div>
<div class="t" style="left:254.50px;top:618px;font-size:12px;line-height:15px;letter-spacing:-0.561px;color:#000;">0.4</div>
<div class="t" style="left:254.50px;top:723px;font-size:12px;line-height:15px;letter-spacing:-0.561px;color:#000;">0.2</div>
<div class="t" style="left:254.50px;top:829px;font-size:12px;line-height:15px;letter-spacing:-0.561px;color:#000;clip-path:inset(0 0 9px 0);">0.0</div>
<svg class="a" style="left:0;top:0" width="1264" height="880" viewBox="0 0 1264 880" shape-rendering="crispEdges">
<rect x="275.5" y="272.5" width="919" height="563" fill="#fff" stroke="#000"/>
<path d="M272 310.5h3M273 362.5h2M272 415.5h3M273 468.5h2M272 520.5h3M273 572.5h2M272 625.5h3M273 678.5h2M272 730.5h3M273 782.5h2M276.5 836v3M322.5 836v2M368.5 836v3M414.5 836v2M460.5 836v3M506.5 836v2M551.5 836v3M597.5 836v2M643.5 836v3M689.5 836v2M735.5 836v3M781.5 836v2M827.5 836v3M873.5 836v2M919.5 836v3M965.5 836v2M1011.5 836v3M1057.5 836v2M1103.5 836v3M1149.5 836v2M1194.5 836v3" stroke="#000" fill="none"/>
<path d="M276 834.5H1194" stroke="#26267e" fill="none"/>
<path d="M276.5 835V829.5H278.5V835M277.5 829V828M281.5 835V831.5H283.5V835M282.5 831V827M285.5 835V830.5H287.5V835M286.5 830V828M290.5 835V830.5H292.5V835M291.5 830V828M295.5 835V815.5H297.5V835M296.5 815V760M297.5 815V775M299.5 835V831.5H301.5V835M300.5 831V806M301.5 831V816M304.5 835V831.5H306.5V835M305.5 831V827M308.5 835V830.5H310.5V835M309.5 830V826M313.5 835V830.5H315.5V835M314.5 830V830M317.5 835V831.5H319.5V835M318.5 831V831M322.5 835V829.5H324.5V835M323.5 829V827M326.5 835V831.5H328.5V835M327.5 831V789M328.5 831V792M331.5 835V829.5H333.5V835M332.5 829V820M333.5 829V825M336.5 835V829.5H338.5V835M337.5 829V828M341.5 835V828.5H343.5V835M342.5 828V820M343.5 828V825M345.5 835V831.5H347.5V835M346.5 831V819M347.5 831V824M349.5 835V831.5H351.5V835M350.5 831V826M354.5 835V831.5H356.5V835M355.5 831V822M356.5 831V826M359.5 835V830.5H361.5V835M360.5 830V824M361.5 830V827M364.5 835V830.5H366.5V835M365.5 830V824M366.5 830V827M368.5 835V831.5H370.5V835M369.5 831V831M372.5 835V831.5H374.5V835M373.5 831V831M377.5 835V829.5H379.5V835M378.5 829V828M382.5 835V830.5H384.5V835M383.5 830V830M386.5 835V831.5H388.5V835M387.5 831V831M391.5 835V831.5H393.5V835M392.5 831V831M395.5 835V830.5H397.5V835M396.5 830V827M400.5 835V832.5H402.5V835M401.5 832V832M405.5 835V830.5H407.5V835M406.5 830V818M407.5 830V823M409.5 835V830.5H411.5V835M410.5 830V818M411.5 830V823M414.5 835V821.5H416.5V835M415.5 821V752M416.5 821V782M419.5 835V830.5H421.5V835M420.5 830V814M421.5 830V814M423.5 835V830.5H425.5V835M424.5 830V824M425.5 830V827M428.5 835V830.5H430.5V835M429.5 830V825M430.5 830V828M432.5 835V830.5H434.5V835M433.5 830V826M437.5 835V829.5H439.5V835M438.5 829V829M441.5 835V828.5H443.5V835M442.5 828V828M446.5 835V831.5H448.5V835M447.5 831V826M451.5 835V831.5H453.5V835M452.5 831V831M455.5 835V831.5H457.5V835M456.5 831V826M460.5 835V831.5H462.5V835M461.5 831V806M462.5 831V816M464.5 835V832.5H466.5V835M465.5 832V832M469.5 835V831.5H471.5V835M470.5 831V810M471.5 831V813M473.5 835V829.5H475.5V835M474.5 829V827M478.5 835V831.5H480.5V835M479.5 831V831M482.5 835V828.5H484.5V835M483.5 828V791M484.5 828V815M487.5 835V829.5H489.5V835M488.5 829V797M489.5 829V798M492.5 835V828.5H494.5V835M493.5 828V810M494.5 828V812M496.5 835V828.5H498.5V835M497.5 828V826M501.5 835V829.5H503.5V835M502.5 829V828M506.5 835V832.5H508.5V835M507.5 832V832M510.5 835V832.5H512.5V835M511.5 832V832M515.5 835V830.5H517.5V835M516.5 830V817M517.5 830V823M519.5 835V830.5H521.5V835M520.5 830V830M524.5 835V830.5H526.5V835M525.5 830V830M529.5 835V831.5H531.5V835M530.5 831V826M534.5 835V829.5H536.5V835M535.5 829V821M536.5 829V825M537.5 835V830.5H539.5V835M538.5 830V805M539.5 830V815M543.5 835V815.5H545.5V835M544.5 815V648M545.5 815V700M548.5 835V831.5H550.5V835M549.5 831V791M550.5 831V802M552.5 835V831.5H554.5V835M553.5 831V816M554.5 831V822M556.5 835V829.5H558.5V835M557.5 829V821M558.5 829V825M561.5 835V828.5H563.5V835M562.5 828V808M563.5 828V817M565.5 835V828.5H567.5V835M566.5 828V811M567.5 828V819M570.5 835V830.5H572.5V835M571.5 830V814M572.5 830V821M574.5 835V831.5H576.5V835M575.5 831V814M576.5 831V821M579.5 835V831.5H581.5V835M580.5 831V827M584.5 835V832.5H586.5V835M585.5 832V832M588.5 835V829.5H590.5V835M589.5 829V828M593.5 835V829.5H595.5V835M594.5 829V829M598.5 835V830.5H600.5V835M599.5 830V814M600.5 830V821M603.5 835V831.5H605.5V835M604.5 831V818M605.5 831V823M607.5 835V829.5H609.5V835M608.5 829V826M611.5 835V786.5H614.5V835M612.5 786V400M611.5 835V326M612.5 835V400M616.5 835V815.5H619.5V835M616.5 815V599M617.5 815V640M620.5 835V815.5H622.5V835M621.5 815V748M622.5 815V799M624.5 835V831.5H626.5V835M625.5 831V808M626.5 831V817M629.5 835V831.5H631.5V835M630.5 831V817M631.5 831V823M634.5 835V828.5H636.5V835M635.5 828V825M636.5 828V828M639.5 835V829.5H641.5V835M640.5 829V812M641.5 829V820M644.5 835V829.5H646.5V835M645.5 829V826M649.5 835V831.5H651.5V835M650.5 831V823M651.5 831V827M653.5 835V831.5H655.5V835M654.5 831V828M658.5 835V831.5H660.5V835M659.5 831V823M660.5 831V827M663.5 835V828.5H665.5V835M664.5 828V816M665.5 828V822M667.5 835V831.5H669.5V835M668.5 831V822M669.5 831V826M671.5 835V829.5H673.5V835M672.5 829V826M676.5 835V830.5H678.5V835M677.5 830V830M680.5 835V830.5H682.5V835M681.5 830V790M682.5 830V805M685.5 835V831.5H687.5V835M686.5 831V823M687.5 831V827M688.5 835V831.5H690.5V835M689.5 831V791M690.5 831V806M693.5 835V828.5H695.5V835M694.5 828V807M695.5 828V816M698.5 835V829.5H700.5V835M699.5 829V813M700.5 829V820M702.5 835V831.5H704.5V835M703.5 831V813M704.5 831V820M708.5 835V830.5H710.5V835M709.5 830V827M713.5 835V829.5H715.5V835M714.5 829V813M715.5 829V820M717.5 835V829.5H719.5V835M718.5 829V824M719.5 829V827M722.5 835V831.5H724.5V835M723.5 831V818M724.5 831V823M726.5 835V828.5H728.5V835M727.5 828V825M728.5 828V828M731.5 835V831.5H733.5V835M732.5 831V818M733.5 831V823M735.5 835V830.5H737.5V835M736.5 830V830M740.5 835V831.5H742.5V835M741.5 831V830M745.5 835V828.5H747.5V835M746.5 828V828M749.5 835V832.5H751.5V835M750.5 832V832M754.5 835V828.5H756.5V835M755.5 828V819M756.5 828V824M758.5 835V828.5H760.5V835M759.5 828V825M760.5 828V828M763.5 835V831.5H765.5V835M764.5 831V789M765.5 831V806M768.5 835V831.5H770.5V835M769.5 831V820M770.5 831V825M772.5 835V831.5H774.5V835M773.5 831V831M777.5 835V815.5H779.5V835M778.5 815V757M779.5 815V808M782.5 835V831.5H784.5V835M783.5 831V807M784.5 831V808M786.5 835V829.5H788.5V835M787.5 829V804M788.5 829V814M791.5 835V828.5H793.5V835M792.5 828V818M793.5 828V823M795.5 835V829.5H797.5V835M796.5 829V789M797.5 829V805M800.5 835V828.5H802.5V835M801.5 828V788M802.5 828V789M805.5 835V817.5H807.5V835M806.5 817V755M807.5 817V791M809.5 835V828.5H811.5V835M810.5 828V808M811.5 828V817M813.5 835V815.5H815.5V835M814.5 815V748M815.5 815V749M817.5 835V831.5H819.5V835M818.5 831V820M819.5 831V825M823.5 835V829.5H825.5V835M824.5 829V828M827.5 835V831.5H829.5V835M828.5 831V830M832.5 835V829.5H834.5V835M833.5 829V829M836.5 835V831.5H838.5V835M837.5 831V827M841.5 835V831.5H843.5V835M842.5 831V831M846.5 835V831.5H848.5V835M847.5 831V824M848.5 831V827M851.5 835V828.5H853.5V835M852.5 828V824M853.5 828V827M855.5 835V828.5H857.5V835M856.5 828V826M860.5 835V829.5H862.5V835M861.5 829V802M862.5 829V806M864.5 835V831.5H866.5V835M865.5 831V818M866.5 831V823M869.5 835V817.5H871.5V835M870.5 817V771M871.5 817V772M873.5 835V830.5H875.5V835M874.5 830V815M875.5 830V822M878.5 835V830.5H880.5V835M879.5 830V821M880.5 830V825M883.5 835V830.5H885.5V835M884.5 830V782M885.5 830V784M887.5 835V829.5H889.5V835M888.5 829V811M889.5 829V818M892.5 835V830.5H894.5V835M893.5 830V830M896.5 835V829.5H898.5V835M897.5 829V829M901.5 835V830.5H903.5V835M902.5 830V830M905.5 835V829.5H907.5V835M906.5 829V815M907.5 829V822M910.5 835V828.5H912.5V835M911.5 828V816M912.5 828V822M915.5 835V829.5H917.5V835M916.5 829V809M917.5 829V818M919.5 835V830.5H921.5V835M920.5 830V819M921.5 830V824M924.5 835V821.5H926.5V835M925.5 821V733M926.5 821V740M928.5 835V830.5H930.5V835M929.5 830V806M930.5 830V816M933.5 835V828.5H935.5V835M934.5 828V812M935.5 828V820M937.5 835V830.5H939.5V835M938.5 830V825M939.5 830V828M941.5 835V829.5H943.5V835M942.5 829V807M943.5 829V816M946.5 835V830.5H948.5V835M947.5 830V821M948.5 830V825M951.5 835V830.5H953.5V835M952.5 830V821M953.5 830V825M956.5 835V830.5H958.5V835M957.5 830V827M960.5 835V828.5H962.5V835M961.5 828V797M962.5 828V810M965.5 835V830.5H967.5V835M966.5 830V830M970.5 835V832.5H972.5V835M971.5 832V832M974.5 835V831.5H976.5V835M975.5 831V831M979.5 835V829.5H981.5V835M980.5 829V826M983.5 835V831.5H985.5V835M984.5 831V831M988.5 835V831.5H990.5V835M989.5 831V798M990.5 831V805M993.5 835V817.5H995.5V835M994.5 817V769M995.5 817V792M998.5 835V829.5H1000.5V835M999.5 829V815M1000.5 829V822M1002.5 835V830.5H1004.5V835M1003.5 830V822M1004.5 830V826M1006.5 835V828.5H1008.5V835M1007.5 828V816M1008.5 828V822M1012.5 835V828.5H1014.5V835M1013.5 828V815M1014.5 828V822M1015.5 835V828.5H1017.5V835M1016.5 828V820M1017.5 828V825M1019.5 835V815.5H1021.5V835M1020.5 815V710M1021.5 815V712M1023.5 835V828.5H1025.5V835M1024.5 828V785M1025.5 828V801M1028.5 835V829.5H1030.5V835M1029.5 829V821M1030.5 829V825M1034.5 835V831.5H1036.5V835M1035.5 831V823M1036.5 831V827M1039.5 835V832.5H1041.5V835M1040.5 832V832M1043.5 835V831.5H1045.5V835M1044.5 831V831M1048.5 835V832.5H1050.5V835M1049.5 832V832M1052.5 835V832.5H1054.5V835M1053.5 832V832M1057.5 835V832.5H1059.5V835M1058.5 832V832M1061.5 835V829.5H1063.5V835M1062.5 829V816M1063.5 829V817M1066.5 835V831.5H1068.5V835M1067.5 831V831M1070.5 835V830.5H1072.5V835M1071.5 830V822M1072.5 830V826M1075.5 835V831.5H1077.5V835M1076.5 831V831M1080.5 835V828.5H1082.5V835M1081.5 828V824M1082.5 828V827M1084.5 835V830.5H1086.5V835M1085.5 830V830M1089.5 835V831.5H1091.5V835M1090.5 831V826M1094.5 835V829.5H1096.5V835M1095.5 829V829M1098.5 835V831.5H1100.5V835M1099.5 831V831M1103.5 835V831.5H1105.5V835M1104.5 831V831M1107.5 835V832.5H1109.5V835M1108.5 832V832M1112.5 835V831.5H1114.5V835M1113.5 831V829M1117.5 835V832.5H1119.5V835M1118.5 832V832M1121.5 835V831.5H1123.5V835M1122.5 831V830M1126.5 835V832.5H1128.5V835M1127.5 832V832M1130.5 835V831.5H1132.5V835M1131.5 831V831M1135.5 835V830.5H1137.5V835M1136.5 830V826M1140.5 835V832.5H1142.5V835M1141.5 832V832M1144.5 835V828.5H1146.5V835M1145.5 828V828M1149.5 835V832.5H1151.5V835M1150.5 832V832M1153.5 835V830.5H1155.5V835M1154.5 830V818M1155.5 830V823M1158.5 835V831.5H1160.5V835M1159.5 831V830M1163.5 835V828.5H1165.5V835M1164.5 828V825M1165.5 828V828M1167.5 835V831.5H1169.5V835M1168.5 831V830M1172.5 835V831.5H1174.5V835M1173.5 831V831M1176.5 835V832.5H1178.5V835M1177.5 832V832M1181.5 835V831.5H1183.5V835M1182.5 831V831M1186.5 835V832.5H1188.5V835M1187.5 832V832M1190.5 835V830.5H1192.5V835M1191.5 830V829" stroke="#26267e" fill="none"/>
<path d="M589 315.5h46M612.5 316V319M521 637.5h46M544.5 638V641M277 749.5h46M300.5 750V798M304 778.5h46M327.5 779V782M392 741.5h46M415.5 742V745M460 780.5h46M483.5 781V784M658 779.5h46M681.5 780V783M741 746.5h46M764.5 747V781M791 737.5h46M814.5 738V741M847 760.5h46M870.5 761V764M902 722.5h46M925.5 723V726M938 786.5h46M961.5 787V790M971 758.5h46M994.5 759V762M997 699.5h46M1020.5 700V703" stroke="#000" fill="none"/>
</svg>
<div class="t" style="left:590.00px;top:301px;font-size:12px;line-height:15px;letter-spacing:0.160px;color:#000;">273.122</div>
<div class="t" style="left:522.00px;top:623px;font-size:12px;line-height:15px;letter-spacing:0.160px;color:#000;">258.369</div>
<div class="t" style="left:278.00px;top:735px;font-size:12px;line-height:15px;letter-spacing:0.160px;color:#000;">205.178</div>
<div class="t" style="left:305.00px;top:764px;font-size:12px;line-height:15px;letter-spacing:0.288px;color:#000;">211.059</div>
<div class="t" style="left:393.00px;top:727px;font-size:12px;line-height:15px;letter-spacing:0.160px;color:#000;">230.347</div>
<div class="t" style="left:461.00px;top:766px;font-size:12px;line-height:15px;letter-spacing:0.160px;color:#000;">245.176</div>
<div class="t" style="left:659.00px;top:765px;font-size:12px;line-height:15px;letter-spacing:0.160px;color:#000;">288.335</div>
<div class="t" style="left:742.00px;top:732px;font-size:12px;line-height:15px;letter-spacing:0.160px;color:#000;">306.375</div>
<div class="t" style="left:792.00px;top:723px;font-size:12px;line-height:15px;letter-spacing:0.160px;color:#000;">317.134</div>
<div class="t" style="left:848.00px;top:746px;font-size:12px;line-height:15px;letter-spacing:0.288px;color:#000;">329.311</div>
<div class="t" style="left:903.00px;top:708px;font-size:12px;line-height:15px;letter-spacing:0.160px;color:#000;">341.329</div>
<div class="t" style="left:939.00px;top:772px;font-size:12px;line-height:15px;letter-spacing:0.160px;color:#000;">349.294</div>
<div class="t" style="left:972.00px;top:744px;font-size:12px;line-height:15px;letter-spacing:0.160px;color:#000;">356.461</div>
<div class="t" style="left:998.00px;top:685px;font-size:12px;line-height:15px;letter-spacing:0.160px;color:#000;">362.070</div>
<div class="t" style="left:266.30px;top:839px;font-size:12px;line-height:15px;letter-spacing:-0.674px;color:#000;">200</div>
<div class="t" style="left:358.18px;top:839px;font-size:12px;line-height:15px;letter-spacing:-0.674px;color:#000;">220</div>
<div class="t" style="left:450.06px;top:839px;font-size:12px;line-height:15px;letter-spacing:-0.674px;color:#000;">240</div>
<div class="t" style="left:541.94px;top:839px;font-size:12px;line-height:15px;letter-spacing:-0.674px;color:#000;">260</div>
<div class="t" style="left:633.82px;top:839px;font-size:12px;line-height:15px;letter-spacing:-0.674px;color:#000;">280</div>
<div class="t" style="left:725.70px;top:839px;font-size:12px;line-height:15px;letter-spacing:-0.674px;color:#000;">300</div>
<div class="t" style="left:817.58px;top:839px;font-size:12px;line-height:15px;letter-spacing:-0.674px;color:#000;">320</div>
<div class="t" style="left:909.46px;top:839px;font-size:12px;line-height:15px;letter-spacing:-0.674px;color:#000;">340</div>
<div class="t" style="left:1001.34px;top:839px;font-size:12px;line-height:15px;letter-spacing:-0.674px;color:#000;">360</div>
<div class="t" style="left:1093.22px;top:839px;font-size:12px;line-height:15px;letter-spacing:-0.674px;color:#000;">380</div>
<div class="t" style="left:1176.50px;top:839px;font-size:12px;line-height:15px;letter-spacing:-0.777px;color:#000;">m/z</div>
<div class="a" style="left:1199px;top:254px;width:1px;height:600px;background:#fff;"></div>
<div class="a" style="left:1205px;top:254px;width:6px;height:11px;background:#d4d0c8;box-shadow:inset -1px -1px 0 #404040,inset 0 1px 0 #fff,inset -2px -2px 0 #808080;"></div>
<div class="a" style="left:1204px;top:252px;width:1px;height:602px;background:#202020;"></div>
<div class="a" style="left:1205px;top:258px;width:4px;height:3px;background:#fff;border-radius:0 2px 0 0;opacity:.9;"></div>
<div class="a btn" style="left:1214px;top:254px;width:11px;height:11px;background:#d4d0c8;"></div>
<svg class="a" style="left:1214px;top:254px" width="11" height="11" viewBox="0 0 11 11"><path d="M2.500 2.500l5 5M7.500 2.500l-5 5" stroke="#000" stroke-width="1.700"/></svg>
<div class="a sunken" style="left:1209px;top:267px;width:19px;height:590px;background:#fff;"></div>
<div class="a" style="left:1211px;top:269px;width:15px;height:19px;background:#d4d0c8;box-shadow:inset 1px 1px 0 #fff,inset -1px -1px 0 #808080;"></div>
<div class="a" style="left:1211px;top:288px;width:15px;height:1px;background:#404040;"></div>
<div class="a" style="left:1211px;top:301px;width:15px;height:1px;background:#707070;"></div>
<div class="a" style="left:1211px;top:314px;width:15px;height:1px;background:#707070;"></div>
<div class="a" style="left:1211px;top:327px;width:15px;height:1px;background:#707070;"></div>
<div class="a" style="left:1211px;top:340px;width:15px;height:1px;background:#707070;"></div>
<div class="a" style="left:1211px;top:353px;width:15px;height:1px;background:#707070;"></div>
<div class="a" style="left:1211px;top:366px;width:15px;height:1px;background:#707070;"></div>
<div class="a" style="left:1211px;top:379px;width:15px;height:1px;background:#707070;"></div>
<div class="a" style="left:1211px;top:392px;width:15px;height:1px;background:#707070;"></div>
<div class="a" style="left:1211px;top:405px;width:15px;height:1px;background:#707070;"></div>
<div class="a" style="left:1211px;top:418px;width:15px;height:1px;background:#707070;"></div>
<div class="a" style="left:1211px;top:431px;width:15px;height:1px;background:#707070;"></div>
<div class="a" style="left:1211px;top:444px;width:15px;height:1px;background:#707070;"></div>
<div class="a" style="left:1211px;top:457px;width:15px;height:1px;background:#707070;"></div>
<div class="a" style="left:1211px;top:470px;width:15px;height:1px;background:#707070;"></div>
<div class="a" style="left:1211px;top:483px;width:15px;height:1px;background:#707070;"></div>
<div class="a" style="left:1211px;top:496px;width:15px;height:1px;background:#707070;"></div>
<div class="a" style="left:1211px;top:509px;width:15px;height:1px;background:#707070;"></div>
<div class="a" style="left:1211px;top:522px;width:15px;height:1px;background:#707070;"></div>
<div class="a" style="left:1211px;top:535px;width:15px;height:1px;background:#707070;"></div>
<div class="a" style="left:1211px;top:548px;width:15px;height:1px;background:#707070;"></div>
<div class="a" style="left:1211px;top:561px;width:15px;height:1px;background:#707070;"></div>
<div class="a" style="left:1211px;top:574px;width:15px;height:1px;background:#707070;"></div>
<div class="a" style="left:1211px;top:587px;width:15px;height:1px;background:#707070;"></div>
<div class="a" style="left:1211px;top:600px;width:15px;height:1px;background:#707070;"></div>
<div class="a" style="left:1211px;top:613px;width:15px;height:1px;background:#707070;"></div>
<div class="a" style="left:1211px;top:626px;width:15px;height:1px;background:#707070;"></div>
<div class="a" style="left:1211px;top:639px;width:15px;height:1px;background:#707070;"></div>
<div class="a" style="left:1231px;top:254px;width:1px;height:600px;background:#fff;"></div>
<div class="a" style="left:0px;top:852px;width:1264px;height:28px;background:#d4d0c8;box-shadow:inset 0 1px 0 #d4d0c8,inset 0 2px 0 #fff;"></div>
<div class="a btn" style="left:-2px;top:856px;width:40px;height:22px;background:#d4d0c8;"></div>
<svg class="a" style="left:0;top:859px" width="5" height="16" viewBox="0 0 5 16"><path d="M0 1c2 0 3 1 4 2v10c-1-1-2-2-4-2z" fill="#58a820"/><path d="M0 9c2 0 3 1 4 2v3c-1-1-2-2-4-2z" fill="#e8c020"/></svg>
<div class="t" style="left:5.50px;top:860px;font-size:12px;line-height:15px;letter-spacing:0.432px;color:#000;font-weight:bold;">Start</div>
<div class="a" style="left:45px;top:858px;width:3px;height:18px;background:#d4d0c8;box-shadow:inset 1px 1px 0 #fff,inset -1px -1px 0 #808080;"></div>
<svg class="a" style="left:55px;top:858px" width="18" height="18" viewBox="0 0 18 18">
<circle cx="9" cy="10" r="6.200" fill="none" stroke="#2a78d8" stroke-width="3"/><rect x="6" y="8.500" width="10" height="2.200" fill="#2a78d8"/><rect x="10" y="11" width="7" height="3" fill="#d4d0c8"/>
<path d="M1.500 12C1 6 10 1 16.500 2.500" stroke="#f0b020" stroke-width="1.600" fill="none"/></svg>
<svg class="a" style="left:77px;top:858px" width="18" height="18" viewBox="0 0 18 18">
<rect x="1.500" y="2.500" width="14" height="14" rx="2.500" fill="#2f74d0" stroke="#1a4a98"/><rect x="4" y="5" width="9" height="9" rx="1" fill="#e8f0fc"/><path d="M6 9.500h5M9 7l2.500 2.500L9 12" stroke="#2060c0" stroke-width="1.500" fill="none"/><path d="M11 3l4-2v4z" fill="#fff" stroke="#1a4a98" stroke-width=".5"/></svg>
<svg class="a" style="left:100px;top:858px" width="19" height="18" viewBox="0 0 19 18">
<path d="M1.500 5.500l2-2h5l1.500 2h7v9l-2 2h-13.500z" fill="#f0d878" stroke="#b09030"/><path d="M3 8h12.500v7H3z" fill="#f8ecb0"/><circle cx="10" cy="10.500" r="3" fill="#e4ecf8" stroke="#9098a8"/><path d="M14 13l2 3" stroke="#806020" stroke-width="1.500"/></svg>
<div class="t" style="left:128px;top:856px;font-size:13px;font-weight:bold;line-height:13px;">»</div>
<div class="a" style="left:143px;top:858px;width:3px;height:18px;background:#d4d0c8;box-shadow:inset 1px 1px 0 #fff,inset -1px -1px 0 #808080;"></div>
<div class="a btn" style="left:150px;top:857px;width:160px;height:21px;background:#d4d0c8;"></div>
<svg class="a" style="left:153px;top:859px" width="18" height="17" viewBox="0 0 18 17"><rect x="1" y="0" width="16" height="16" fill="#fff"/>
<path d="M3 2v9h4 M6 3v5 M10 4v10h6 M12 9v5 M14 6v8" stroke="#0a246a" stroke-width="1.500" fill="none"/><circle cx="6.500" cy="3.500" r="1.800" fill="#e03020"/><circle cx="4" cy="13" r="2" fill="#e8b020"/><path d="M1 8c3 1 5 3 6 6" stroke="#3060c0" fill="none"/></svg>
<div class="t" style="left:173.50px;top:860px;font-size:11px;line-height:14px;letter-spacing:0.126px;color:#000;">flexControl - autoflex TO...</div>
<div class="a" style="left:313px;top:857px;width:160px;height:21px;background:#ebe9e4;box-shadow:inset 1px 1px 0 #404040,inset -1px -1px 0 #fff,inset 2px 2px 0 #808080;"></div>
<svg class="a" style="left:318px;top:860px" width="16" height="16" viewBox="0 0 16 16"><rect width="16" height="16" fill="#fdfdff"/><path d="M4.500 2v10M10.500 1.500v10.500M12.500 4v8" stroke="#4a2a3a" stroke-width="1.300"/><path d="M4.500 2v3M10.500 1.500v3M12.500 4v2" stroke="#a03030" stroke-width="1.300"/><path d="M7.500 4v7.500" stroke="#f4b0a0" stroke-width="1.400"/><path d="M2 12.500h12.500" stroke="#3c8c84"/><path d="M3 14.500h4M8 14h3" stroke="#9cb0e8"/><path d="M0 3l2.500 10" stroke="#c8d0f0" stroke-width="1.500"/></svg>
<div class="t" style="left:338.00px;top:861px;font-size:11px;line-height:14px;letter-spacing:0.300px;color:#000;font-weight:bold;">flexAnalysis - unknow...</div>
<div class="a" style="left:1110px;top:856px;width:152px;height:22px;background:#d4d0c8;box-shadow:inset 1px 1px 0 #808080,inset -1px -1px 0 #fff;"></div>
<svg class="a" style="left:1113px;top:859px" width="90" height="15" viewBox="0 0 90 15">
<rect x="0.500" y="0.500" width="13" height="13.500" fill="#c01818"/><path d="M2 11c3-1 6-5 6-8 0-1-1.500-1-1.500 0 0 3 3 6 5.500 6 1 0 1-1.500-.5-1.500-3 0-7 2-9.500 3.500z" fill="none" stroke="#fff" stroke-width="1.100"/>
<rect x="23" y="1" width="9" height="8" fill="#28388c"/><rect x="18" y="5" width="9" height="8" fill="#3a50b0"/><rect x="19.500" y="6.500" width="6" height="4" fill="#8098e0"/><rect x="24.500" y="2.500" width="6" height="3" fill="#6078c8"/>
<ellipse cx="43" cy="7" rx="6" ry="6.500" fill="#606060"/><ellipse cx="42" cy="6.500" rx="3.500" ry="4" fill="#b8b8b8"/><ellipse cx="42" cy="6.500" rx="1.600" ry="2" fill="#404040"/><path d="M48 9c1 2 1 3 0 5" stroke="#8080d0" fill="none"/>
<rect x="54.500" y="1.500" width="12" height="12" fill="#f4f0f8" stroke="#7848a0"/><path d="M56 1.500v12" stroke="#7848a0" stroke-width="2"/><path d="M59 11l2-6 2 2 1.500-3" stroke="#502880" stroke-width="1.300" fill="none"/>
<rect x="71.500" y="0" width="16" height="15" fill="#48a828"/><circle cx="79.500" cy="7.500" r="5.800" fill="none" stroke="#d8f0d0" stroke-width="1.200"/><path d="M76 7.500l3 3 5-6" stroke="#fff" stroke-width="2.200" fill="none"/>
</svg>
<div class="t" style="left:1208.00px;top:860px;font-size:11px;line-height:14px;letter-spacing:-0.020px;color:#000;">10:11 AM</div>
</div>
</body></html>
